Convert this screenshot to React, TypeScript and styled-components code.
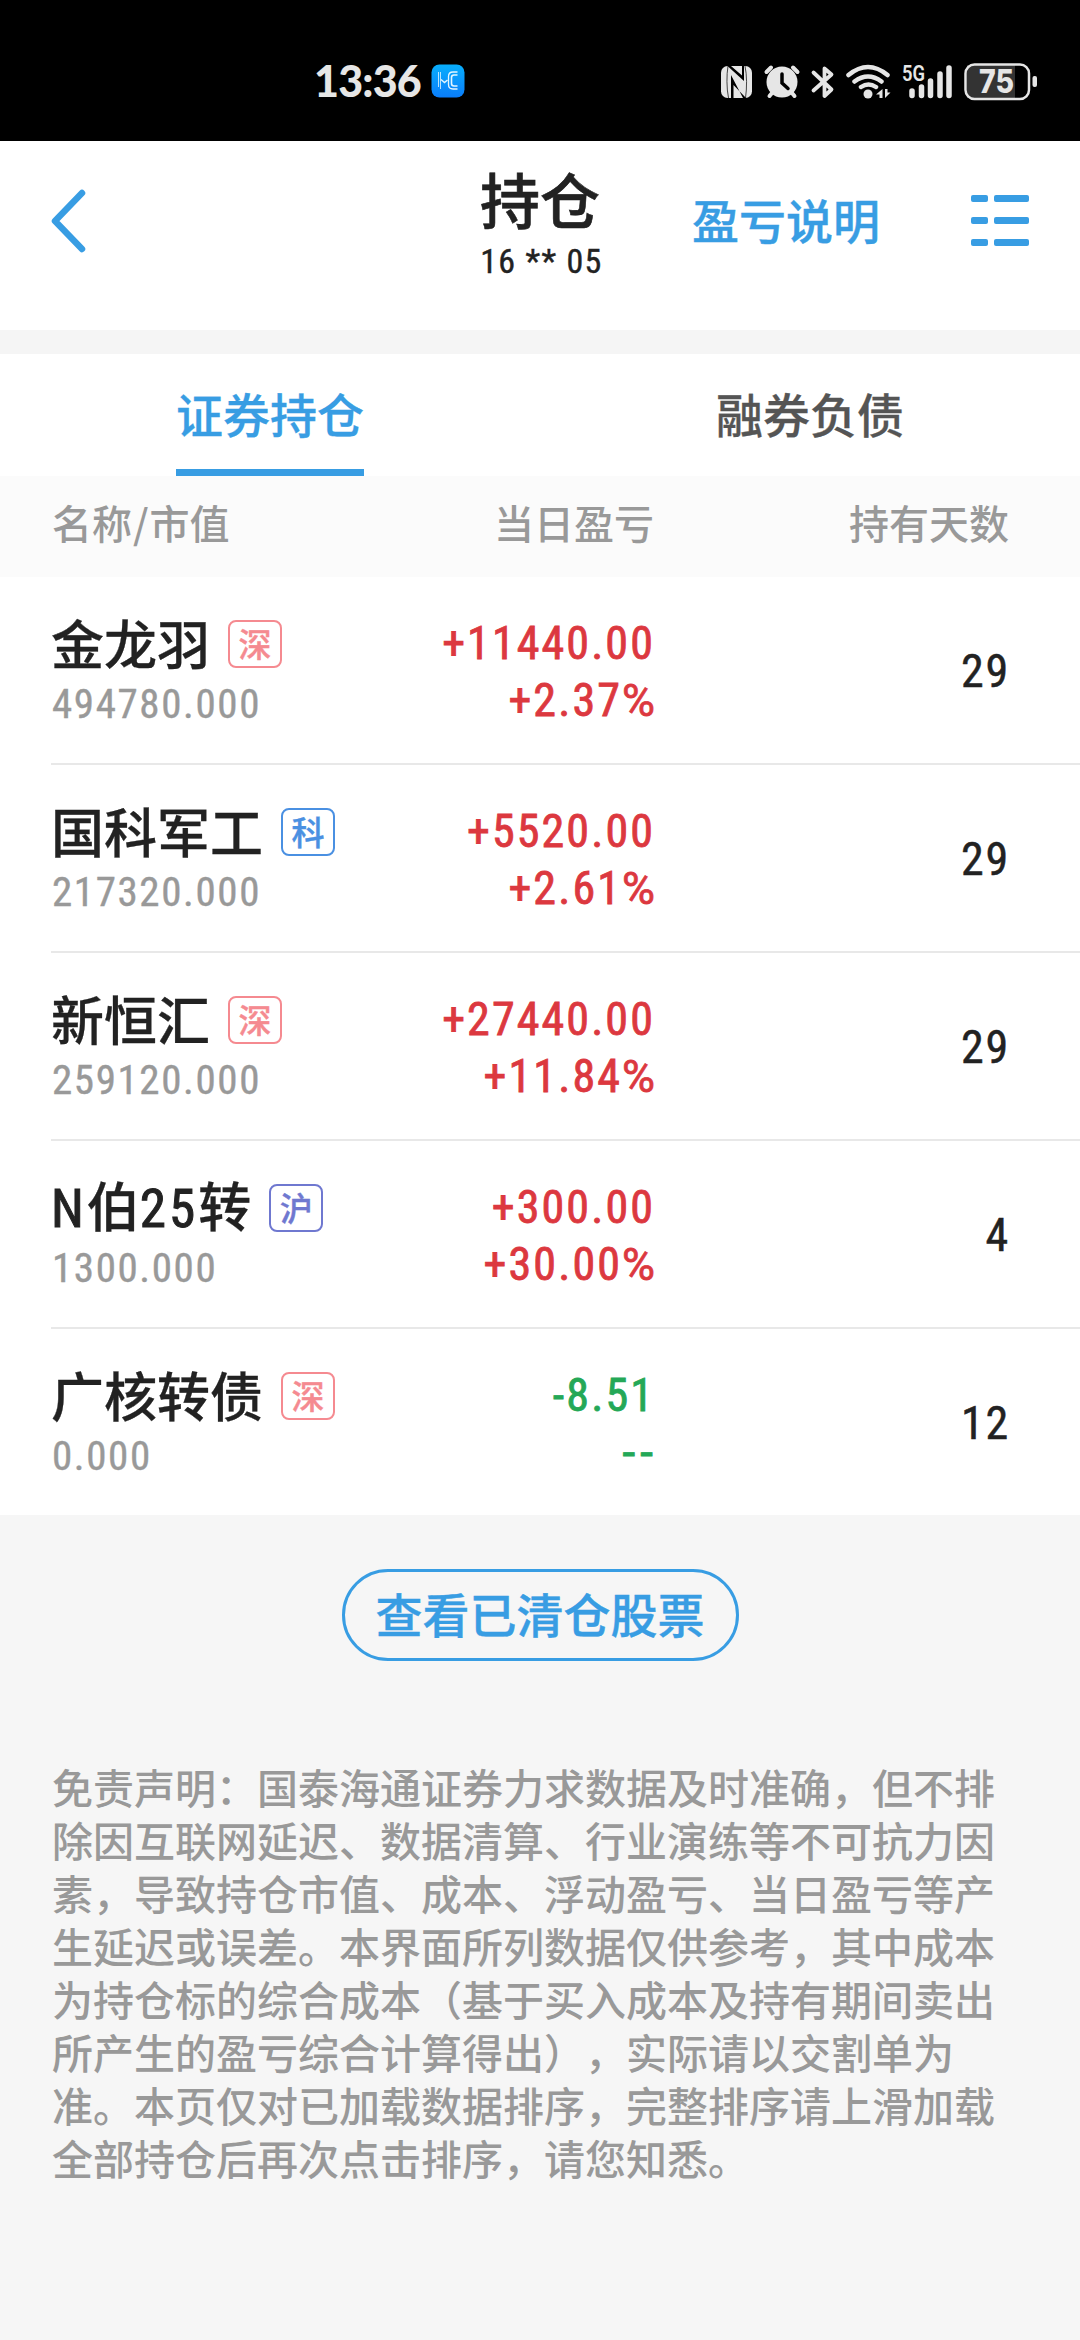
import React from "react";
import styled, { createGlobalStyle } from "styled-components";

const CJK = `"Noto Sans CJK SC", sans-serif`;
const NUM = `Roboto, "Noto Sans CJK SC", sans-serif`;
const BLUE = "#389de3";

const GlobalStyle = createGlobalStyle`
  * { box-sizing: border-box; }
  body { margin: 0; background: #f6f6f6; font-family: ${CJK}; }
`;

const Screen = styled.div`
  width: 1080px;
  height: 2340px;
  overflow: hidden;
  display: flex;
  flex-direction: column;
  background: #f6f6f6;
`;

const StatusBar = styled.div`
  height: 141px;
  flex: none;
  background: #000;
  color: #e6e6e6;
  display: flex;
  align-items: flex-start;
  justify-content: space-between;
  padding: 56px 42px 0 314px;
`;

const StatusGroup = styled.div`
  display: flex;
  align-items: center;
  height: 50px;
`;

const Clock = styled.span`
  font: 900 43px/50px Lato, sans-serif;
  width: 117px;
  letter-spacing: -0.8px;
  white-space: nowrap;
`;

const StatusSvg = styled.svg`
  display: block;
`;

const Header = styled.header`
  height: 189px;
  flex: none;
  background: #fff;
  display: grid;
  grid-template-columns: 480px 120px 480px;
`;

const HeaderSide = styled.div<{ $right?: boolean }>`
  display: flex;
  align-items: center;
  height: 160px;
  padding: ${(p) => (p.$right ? "0 51px 0 92px" : "0 0 0 50px")};
  justify-content: ${(p) => (p.$right ? "space-between" : "flex-start")};
`;

const TitleBlock = styled.div`
  display: flex;
  flex-direction: column;
  align-items: center;
  padding-top: 21px;
`;

const Title = styled.h1`
  margin: 0;
  font-size: 60px;
  line-height: 72px;
  font-weight: 500;
  -webkit-text-stroke: 0.6px currentColor;
  color: #222;
`;

const Account = styled.span`
  font: 400 34px/40px ${NUM};
  font-stretch: 75%;
  letter-spacing: 1.3px;
  -webkit-text-stroke: 0.4px currentColor;
  color: #222;
  white-space: nowrap;
  margin: 7px 0 0 3px;
`;

const HeaderLink = styled.a`
  font-size: 47px;
  line-height: 60px;
  padding-bottom: 4px;
  font-weight: 500;
  -webkit-text-stroke: 0.4px currentColor;
  color: ${BLUE};
`;

const Tabs = styled.nav`
  border-top: 24px solid #f5f5f5;
  height: 146px;
  flex: none;
  background: #fff;
  display: grid;
  grid-template-columns: 1fr 1fr;
  justify-items: center;
`;

const Tab = styled.div<{ $active?: boolean }>`
  height: 122px;
  padding-top: 24px;
  font-size: 47px;
  line-height: 70px;
  font-weight: 500;
  -webkit-text-stroke: 0.3px currentColor;
  color: ${(p) => (p.$active ? BLUE : "#555")};
  border-bottom: 7px solid ${(p) => (p.$active ? BLUE : "transparent")};
`;

const columns = `
  display: grid;
  grid-template-columns: 330px 1fr 355px;
`;

const TableHead = styled.div`
  ${columns}
  height: 101px;
  flex: none;
  padding: 0 71px 0 52px;
  background: #fbfbfb;
  font-size: 40px;
  line-height: 93px;
  font-weight: 500;
  color: #999;
`;

const HeadCell = styled.span<{ $right?: boolean }>`
  text-align: ${(p) => (p.$right ? "right" : "left")};
`;

const Slash = styled.span`
  margin: 0 1px;
`;

const List = styled.div`
  background: #fff;
  padding-left: 51px;
  flex: none;
`;

const Row = styled.div`
  ${columns}
  height: 188px;
  padding-right: 71px;
  border-bottom: 2px solid #e8e8e8;
  &:last-child { height: 186px; border-bottom: 0; }
`;

const NameCell = styled.div`
  padding-top: 32px;
  white-space: nowrap;
`;

const NameLine = styled.div`
  display: flex;
  align-items: center;
  height: 70px;
`;

const Name = styled.span`
  font: 500 53px/70px ${CJK};
  -webkit-text-stroke: 0.3px currentColor;
  padding-bottom: 4px;
  color: #222;
`;

const Latin = styled.span`
  font-family: ${NUM};
  font-weight: 400;
  font-stretch: 75%;
  letter-spacing: 3px;
  -webkit-text-stroke: 1px currentColor;
`;

const Tag = styled.span<{ $color: string }>`
  margin-left: 18px;
  width: 54px;
  height: 48px;
  border: 2px solid ${(p) => p.$color};
  border-radius: 8px;
  color: ${(p) => p.$color};
  font-size: 33px;
  line-height: 42px;
  font-weight: 500;
  -webkit-text-stroke: 0.4px currentColor;
  text-align: center;
`;

const Value = styled.div`
  font: 400 41px/50px ${NUM};
  font-stretch: 75%;
  letter-spacing: 1.6px;
  -webkit-text-stroke: 0.4px currentColor;
  padding-left: 1px;
  color: #999;
`;

const ProfitCell = styled.div<{ $down?: boolean }>`
  padding-top: 38px;
  margin-right: -1px;
  text-align: right;
  font: 400 46px/57px ${NUM};
  font-stretch: 75%;
  letter-spacing: 2.1px;
  -webkit-text-stroke: 0.8px currentColor;
  color: ${(p) => (p.$down ? "#24a857" : "#dc383f")};
`;

const Percent = styled.span`
  font-stretch: 100%;
  letter-spacing: 0;
  font-size: 45px;
`;

const Dashes = styled.div`
  font-stretch: 100%;
  letter-spacing: 5px;
  margin-right: -3px;
`;

const DaysCell = styled.div`
  font: 400 46px/188px ${NUM};
  font-stretch: 75%;
  letter-spacing: 1.8px;
  margin-right: -1px;
  -webkit-text-stroke: 0.5px currentColor;
  color: #222;
  text-align: right;
`;

const ClearedButton = styled.button`
  align-self: center;
  margin: 54px 0 0;
  width: 397px;
  height: 92px;
  flex: none;
  border: 3px solid ${BLUE};
  border-radius: 46px;
  background: transparent;
  padding: 0 0 4px;
  font: 500 47px/60px ${CJK};
  -webkit-text-stroke: 0.4px currentColor;
  color: ${BLUE};
  white-space: nowrap;
`;

const Disclaimer = styled.p`
  margin: 99px 0 0 52px;
  width: 960px;
  font-size: 41px;
  line-height: 53px;
  font-weight: 500;
  color: #999;
  text-spacing-trim: space-all;
`;

const RED_TAG = "#f58a90";
const rows = [
  { name: "金龙羽", tag: "深", color: RED_TAG, value: "494780.000", profit: "+11440.00", pct: "+2.37%", days: 29 },
  { name: "国科军工", tag: "科", color: "#4a90e2", value: "217320.000", profit: "+5520.00", pct: "+2.61%", days: 29 },
  { name: "新恒汇", tag: "深", color: RED_TAG, value: "259120.000", profit: "+27440.00", pct: "+11.84%", days: 29 },
  { name: "N伯25转", tag: "沪", color: "#6f78d0", value: "1300.000", profit: "+300.00", pct: "+30.00%", days: 4 },
  { name: "广核转债", tag: "深", color: RED_TAG, value: "0.000", profit: "-8.51", pct: "--", days: 12, down: true },
];

const AppBadge = () => (
  <StatusSvg width="34" height="34" viewBox="0 0 34 34">
    <defs>
      <linearGradient id="badge" x1="0" y1="0" x2="0" y2="1">
        <stop offset="0" stopColor="#08aefc" />
        <stop offset="1" stopColor="#0a7dfb" />
      </linearGradient>
    </defs>
    <rect x="0.5" y="0.5" width="33" height="33" rx="8" fill="url(#badge)" />
    <g fill="none" stroke="#e2f5ff">
      <path d="M7.500 8v15M9.500 8v17" strokeWidth="1" opacity=".8" />
      <path d="M10 15.500l3.500 3 3-2.500" strokeWidth="1.500" />
      <path d="M26.500 8H22c-3 0-4.500 2-4.500 4.500v8c0 3 1.500 4.500 4.500 4.500h4.500" strokeWidth="1.300" />
      <path d="M26.500 11H23c-2 0-2.500 1-2.500 2.500v6c0 2 .8 2.500 2.500 2.500h3.500" strokeWidth="1.600" />
    </g>
  </StatusSvg>
);

const StatusIcons = () => (
  <StatusSvg width="317" height="44" viewBox="720 58 317 44" fill="#e6e6e6" stroke="none">
    <rect x="720" y="65" width="31" height="32" rx="6.500" />
    <path d="M727 65c-1.500 9-1.500 22 .5 32M744 65c2 9 2 22 .5 32" fill="none" stroke="#000" strokeWidth="1" opacity=".7" />
    <path d="M726.500 65L743 80v-15h-2v9.500L730 65zM730 74v23h2.500V84L745 97h-3z" fill="#000" />
    <circle cx="781" cy="81" r="15.500" />
    <path d="M765.500 71l4.500-4.500M792 66.500l4.500 4.500M771 92l-2.500 3M791 92l2.500 3" stroke="#e6e6e6" strokeWidth="4" strokeLinecap="round" />
    <path d="M781 73v9l6 5.500" stroke="#000" strokeWidth="3.500" fill="none" strokeLinecap="round" />
    <path d="M812.500 71.500l18 17-7 6.500V67.500l7 6-18 16" fill="none" stroke="#e6e6e6" strokeWidth="3.800" strokeLinejoin="round" strokeLinecap="round" />
    <g fill="none" stroke="#e6e6e6" strokeWidth="4.500" strokeLinecap="round">
      <path d="M847.500 74q19.500-16 39 0M853.500 80.500q13.500-10 27 0M860 86q7.500-5 15 0" />
    </g>
    <circle cx="867" cy="93" r="4.500" />
    <path d="M881.500 88v9h-3v-3.500H875zM884 97v-9h2.500v3.500h3z" />
    <text x="901" y="80" fontFamily="Roboto, sans-serif" fontWeight="600" fontSize="22" textLength="23" lengthAdjust="spacingAndGlyphs">5G</text>
    <g stroke="#e6e6e6" strokeWidth="5.500" strokeLinecap="round">
      <path d="M911 90v4.500M920.500 86v8.500M929.500 80v14.500M939 73v21.500M948 67v27.500" />
    </g>
    <rect x="966" y="64" width="48" height="33" fill="#333" />
    <rect x="964.500" y="63.500" width="63.500" height="34.500" rx="9" fill="none" stroke="#e6e6e6" strokeWidth="2.500" />
    <rect x="1031.500" y="75" width="4.500" height="11" rx="2" />
    <text x="978" y="92" fontFamily="Inter, sans-serif" fontWeight="800" fontSize="32" textLength="35" lengthAdjust="spacingAndGlyphs">75</text>
  </StatusSvg>
);

const renderName = (name: string) =>
  name.split(/([A-Z0-9]+)/).map((part, i) => (i % 2 ? <Latin key={i}>{part}</Latin> : part));

const Change = ({ value }: { value: string }) =>
  value.endsWith("%") ? (
    <div>
      {value.slice(0, -1)}
      <Percent>%</Percent>
    </div>
  ) : (
    <Dashes>{value}</Dashes>
  );

export default function App() {
  return (
    <>
      <GlobalStyle />
      <Screen>
        <StatusBar>
          <StatusGroup>
            <Clock>13:36</Clock>
            <AppBadge />
          </StatusGroup>
          <StatusGroup>
            <StatusIcons />
          </StatusGroup>
        </StatusBar>
        <Header>
          <HeaderSide>
            <svg width="38" height="66" viewBox="0 0 38 66" fill="none" stroke={BLUE} strokeWidth="6.500" strokeLinecap="round" strokeLinejoin="round">
              <path d="M32 5 5 33l27 28" />
            </svg>
          </HeaderSide>
          <TitleBlock>
            <Title>持仓</Title>
            <Account>16 ** 05</Account>
          </TitleBlock>
          <HeaderSide $right>
            <HeaderLink>盈亏说明</HeaderLink>
            <svg width="58" height="52" viewBox="0 0 58 52" fill={BLUE}>
              {[0, 22, 44].map((y) => (
                <React.Fragment key={y}>
                  <rect x="0" y={y} width="17" height="7" rx="2" />
                  <rect x="23" y={y} width="35" height="7" rx="2" />
                </React.Fragment>
              ))}
            </svg>
          </HeaderSide>
        </Header>
        <Tabs>
          <Tab $active>证券持仓</Tab>
          <Tab>融券负债</Tab>
        </Tabs>
        <TableHead>
          <HeadCell>名称<Slash>/</Slash>市值</HeadCell>
          <HeadCell $right>当日盈亏</HeadCell>
          <HeadCell $right>持有天数</HeadCell>
        </TableHead>
        <List>
          {rows.map((r) => (
            <Row key={r.name}>
              <NameCell>
                <NameLine>
                  <Name>{renderName(r.name)}</Name>
                  <Tag $color={r.color}>{r.tag}</Tag>
                </NameLine>
                <Value>{r.value}</Value>
              </NameCell>
              <ProfitCell $down={r.down}>
                <div>{r.profit}</div>
                <Change value={r.pct} />
              </ProfitCell>
              <DaysCell>{r.days}</DaysCell>
            </Row>
          ))}
        </List>
        <ClearedButton>查看已清仓股票</ClearedButton>
        <Disclaimer>
          免责声明：国泰海通证券力求数据及时准确，但不排除因互联网延迟、数据清算、行业演练等不可抗力因素，导致持仓市值、成本、浮动盈亏、当日盈亏等产生延迟或误差。本界面所列数据仅供参考，其中成本为持仓标的综合成本（基于买入成本及持有期间卖出所产生的盈亏综合计算得出），实际请以交割单为准。本页仅对已加载数据排序，完整排序请上滑加载全部持仓后再次点击排序，请您知悉。
        </Disclaimer>
      </Screen>
    </>
  );
}
